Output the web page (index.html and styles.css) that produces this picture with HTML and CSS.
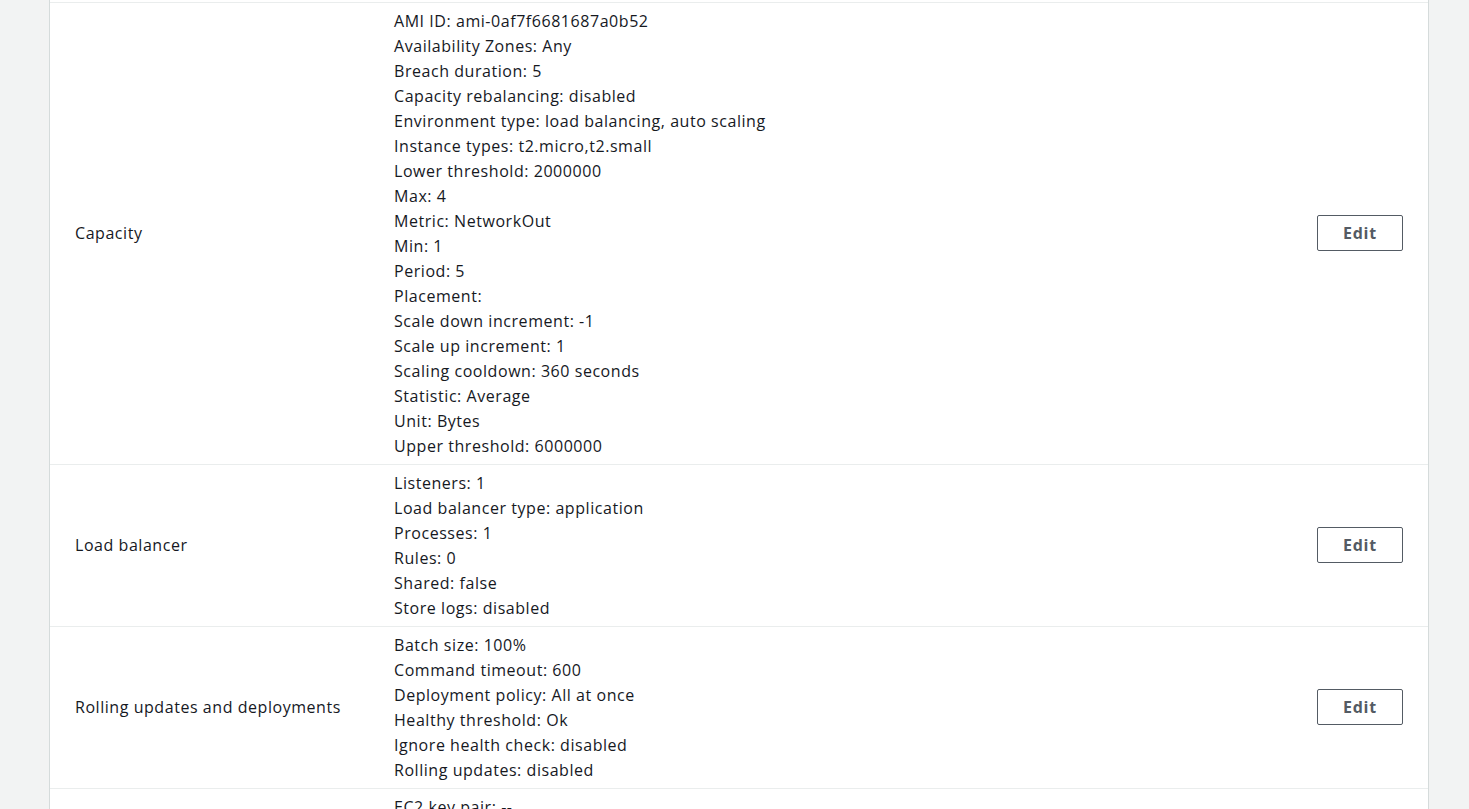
FILE: index.html
```html
<!DOCTYPE html>
<html>
<head>
<meta charset="utf-8">
<link rel="stylesheet" href="styles.css">
</head>
<body>
<div class="page">
  <div class="panel">
    <div class="row">
      <div class="label">Capacity</div>
      <div class="values">
        <div>AMI ID: ami-0af7f6681687a0b52</div>
        <div>Availability Zones: Any</div>
        <div>Breach duration: 5</div>
        <div>Capacity rebalancing: disabled</div>
        <div>Environment type: load balancing, auto scaling</div>
        <div>Instance types: t2.micro,t2.small</div>
        <div>Lower threshold: 2000000</div>
        <div>Max: 4</div>
        <div>Metric: NetworkOut</div>
        <div>Min: 1</div>
        <div>Period: 5</div>
        <div>Placement: </div>
        <div>Scale down increment: -1</div>
        <div>Scale up increment: 1</div>
        <div>Scaling cooldown: 360 seconds</div>
        <div>Statistic: Average</div>
        <div>Unit: Bytes</div>
        <div>Upper threshold: 6000000</div>
      </div>
      <div class="action"><button class="btn">Edit</button></div>
    </div>
    <div class="row">
      <div class="label">Load balancer</div>
      <div class="values">
        <div>Listeners: 1</div>
        <div>Load balancer type: application</div>
        <div>Processes: 1</div>
        <div>Rules: 0</div>
        <div>Shared: false</div>
        <div>Store logs: disabled</div>
      </div>
      <div class="action"><button class="btn">Edit</button></div>
    </div>
    <div class="row">
      <div class="label">Rolling updates and deployments</div>
      <div class="values">
        <div>Batch size: 100%</div>
        <div>Command timeout: 600</div>
        <div>Deployment policy: All at once</div>
        <div>Healthy threshold: Ok</div>
        <div>Ignore health check: disabled</div>
        <div>Rolling updates: disabled</div>
      </div>
      <div class="action"><button class="btn">Edit</button></div>
    </div>
    <div class="row">
      <div class="label"></div>
      <div class="values">
        <div>EC2 key pair: --</div>
      </div>
      <div class="action"></div>
    </div>
  </div>
</div>
</body>
</html>
```
FILE: styles.css
```css
html, body {
  margin: 0;
  padding: 0;
  background: #f2f3f3;
  height: 100%;
  overflow: hidden;
}
body {
  font-family: "Open Sans", "Liberation Sans", sans-serif;
  font-size: 16px;
  letter-spacing: 0.55px;
  color: #16191f;
}
.page {
  padding: 0 40px 0 49px;
}
.panel {
  width: 1378px;
  background: #ffffff;
  border-left: 1px solid #d5dbdb;
  border-right: 1px solid #d5dbdb;
  padding-top: 2px;
  min-height: 809px;
}
.row {
  display: flex;
  align-items: center;
  border-top: 1px solid #eaeded;
  padding: 6px 25px 5px 25px;
}
.label {
  width: 319px;
  flex: none;
  margin-bottom: 2px;
}
.values {
  flex: 1;
  line-height: 25px;
}
.action {
  flex: none;
  width: 86px;
  margin-bottom: 2px;
}
.btn {
  display: block;
  width: 86px;
  height: 36px;
  background: #fff;
  border: 1px solid #545b64;
  border-radius: 2px;
  color: #545b64;
  font-family: "Open Sans", "Liberation Sans", sans-serif;
  font-weight: 700;
  font-size: 16px;
  letter-spacing: 0.8px;
  padding: 0;
  cursor: pointer;
}
```
